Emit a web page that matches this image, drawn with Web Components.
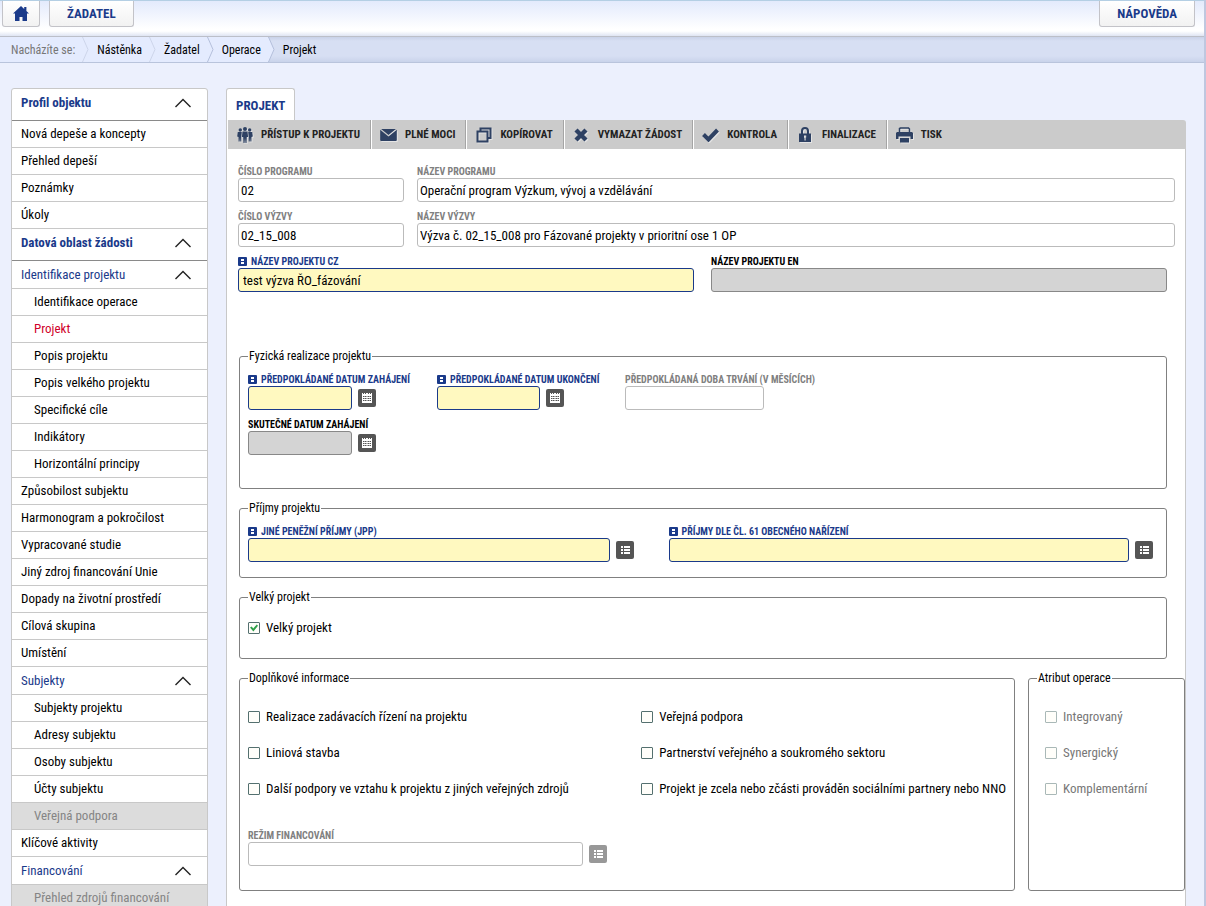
<!DOCTYPE html>
<html lang="cs">
<head>
<meta charset="utf-8">
<title>Projekt</title>
<style>
  html { background: #ecf0fd; scrollbar-width: none; }
  body {
    margin: 0;
    font: 13px/16px "Roboto Condensed", "Liberation Sans Narrow", Roboto, sans-serif;
    color: #000;
    --navy: #1a3a8a;
    --line: #c8c8c8;
  }
</style>
</head>
<body>
<portal-app></portal-app>

<script>
const icons = {
  home: '<svg width="16" height="15" viewBox="0 0 16 15"><path fill="#1a3a8a" d="M8 0 0 7.4h2V15h4.5v-4h3v4H14V7.4h2L13.400 5V1h-2.200v2z"/></svg>',
  people: '<svg width="16" height="16" viewBox="0 0 16 16"><g fill="#2e4163"><circle cx="8" cy="2" r="2"/><circle cx="3.300" cy="3" r="1.700"/><circle cx="12.700" cy="3" r="1.700"/><path d="M5.500 4.500h5l.6 5.500h-1.300L9.500 16h-1L8 11l-.5 5h-1L6.200 10H4.900zM.8 5h4L4.300 10v4.500h-1L3 10.500l-.4 4h-1L1.500 10 .2 9.500zM15.200 5h-4l.5 5v4.500h1l.3-4 .4 4h1l.1-4.500 1.300-.5z"/></g></svg>',
  mail: '<svg width="17" height="12" viewBox="0 0 18 13"><path fill="#2e4163" d="M1 0h16L9 6.500zM0 .8l9 7.400 9-7.400V12a1 1 0 0 1-1 1H1a1 1 0 0 1-1-1z"/></svg>',
  copy: '<svg width="16" height="16" viewBox="0 0 16 16"><path fill="none" stroke="#2e4163" stroke-width="2" d="M4.500 4V1.500h10v9.500h-3M1.500 4.500h10V14.500h-10z"/></svg>',
  cross: '<svg width="14" height="14" viewBox="0 0 14 14"><path stroke="#2e4163" stroke-width="4.400" d="m2 2 10 10M12 2 2 12"/></svg>',
  tick: '<svg width="17" height="14" viewBox="0 0 17 14"><path fill="none" stroke="#2e4163" stroke-width="4" d="m1.500 6.500 5 5L15.500 2"/></svg>',
  lock: '<svg width="12" height="15" viewBox="0 0 12 15"><path fill="none" stroke="#2e4163" stroke-width="2" d="M3 7V4a3 3 0 0 1 6 0v3"/><path fill="#2e4163" fill-rule="evenodd" d="M0 6.500h12V15H0zM5 8.500v2l.5.500v2.500h1.200V11l.5-.5v-2z"/></svg>',
  printer: '<svg width="17" height="16" viewBox="0 0 17 16"><path fill="none" stroke="#2e4163" stroke-width="1.500" d="M3.500 5V1.500L4.500 1h8l1 1v3"/><path fill="#2e4163" d="M0 6 1 5h15l1 1v6h-2.500V9.500h-12V12H0zM4 11h9v4.500H4z"/></svg>',
  up: '<svg width="18" height="10" viewBox="0 0 18 10"><path fill="none" stroke="#222" stroke-width="1.400" d="M1.500 9 9 1.500 16.500 9"/></svg>',
  calendar: '<svg width="18" height="18" viewBox="0 0 18 18"><rect width="18" height="18" rx="2" fill="#555"/><path fill="#fff" d="M4 4h1v1h1V4h1v1h1V4h2v1h1V4h1v1h1V4h1v10H4z"/><path fill="#555" d="M5 7h1.500v1H5zM7 7h1.500v1H7zM9.500 7H11v1H9.500zM11.500 7H13v1h-1.500zM5 9h1.500v1H5zM7 9h1.500v1H7zM9.500 9H11v1H9.500zM11.500 9H13v1h-1.500zM5 11h1.500v1H5zM7 11h1.500v1H7zM9.500 11H11v1H9.500zM11.500 11H13v1h-1.500z"/></svg>',
  list: '<svg width="18" height="18" viewBox="0 0 18 18"><rect width="18" height="18" rx="2" fill="#555"/><path fill="#fff" d="M5 5h2v2H5zM8 5h6v2H8zM5 8h2v2H5zM8 8h6v2H8zM5 11h2v2H5zM8 11h6v2H8z"/></svg>',
  info: '<svg width="9" height="9" viewBox="0 0 9 9"><rect width="9" height="9" rx="1" fill="#1a3a8a"/><path fill="#fff" d="M3 2h3v2H3zM3 5h3v2H3z"/></svg>'
};

class Part extends HTMLElement {
  connectedCallback() {
    if (this.shadowRoot) return;
    this.attachShadow({ mode: 'open' }).innerHTML =
      '<style>*{box-sizing:border-box}svg{display:block;flex:none}' + this.styles() + '</style>' + this.markup();
  }
  text(name) { return this.getAttribute(name) || ''; }
}

customElements.define('top-button', class extends Part {
  styles() { return `
    :host { display: block; }
    button { display: flex; align-items: center; justify-content: center; height: 26px; padding: 0 17px;
      border: 1px solid #c3c3c8; border-top: 0; border-radius: 0 0 3px 3px;
      background: linear-gradient(#fff, #f2f2f2); color: var(--navy); font-family: inherit; font-weight: bold; font-size: 13px; }
    :host([compact]) button { padding: 0 10px; }`; }
  markup() {
    const icon = this.text('icon');
    return `<button type="button"${icon ? ' aria-label="Domů"' : ''}>${icons[icon] || ''}<slot></slot></button>`;
  }
});

customElements.define('top-bar', class extends Part {
  styles() { return `
    :host { display: flex; gap: 9px; height: 37px; padding: 0 9px 0 2px; border-bottom: 1px solid #bcbfc8;
      border-top: 1px solid #b4cfe4; background: linear-gradient(#e3eafc, #fff 80%, #fff 86%, #dfe4f3); }
    top-button:last-child { margin-left: auto; }`; }
  markup() { return `<top-button icon="home" compact></top-button><top-button>ŽADATEL</top-button><top-button>NÁPOVĚDA</top-button>`; }
});

customElements.define('bread-crumbs', class extends Part {
  styles() { return `
    :host { display: block; }
    nav { display: flex; height: 26px; border-bottom: 1px solid #b9c4dc; font-size: 12px; line-height: 26px;
      background: linear-gradient(#c9d2e8, #d7dff3 4px, #d7dff3 19px, #c9d3ea); }
    span, a { padding: 0 7px 0 8px; background: #e4ebfe; color: #000; text-decoration: none; white-space: nowrap; }
    span { padding-left: 11px; color: #777; }
    a:last-child { background: none; }
    svg { background: #e4ebfe; }
    svg.last { background: none; }`; }
  markup() {
    const chevron = (stroke, cls) => `<svg class="${cls}" width="7" height="25" viewBox="0 0 7 25"><path fill="#e4ebfe" stroke="${stroke}" d="M-1 -1 .5 0 6 12.500 .5 25-1 26z"/></svg>`;
    return `<nav aria-label="Navigace"><span>Nacházíte se:</span>${chevron('#cdd5ea', '')}<a href="#">Nástěnka</a>${chevron('#cdd5ea', '')}<a href="#">Žadatel</a>${chevron('#b4bfdb', '')}<a href="#">Operace</a>${chevron('#b4bfdb', 'last')}<a href="#" aria-current="page">Projekt</a></nav>`;
  }
});

customElements.define('menu-row', class extends Part {
  styles() { return `
    :host { display: block; border-bottom: 1px solid var(--line); }
    a { display: flex; align-items: center; justify-content: space-between; height: 26px; padding: 0 15px 0 9px; color: #000; text-decoration: none; white-space: nowrap; }
    :host([kind=head]) { border-color: #8a8a8a; }
    :host([kind=head]) a { height: 31px; padding-bottom: 4px; color: var(--navy); font-weight: bold; }
    :host([kind=group]) a { height: 27px; color: var(--navy); }
    :host([kind=sub]) a, :host([kind=off]) a { padding-left: 22px; }
    :host([kind=off]) { background: #dcdcdc; }
    :host([kind=off]) a { color: #858585; }
    :host([current]) a { color: #d0002a; }`; }
  markup() {
    const folds = ['head', 'group'].includes(this.text('kind'));
    return `<a href="#"><slot></slot>${folds ? icons.up : ''}</a>`;
  }
});

customElements.define('side-menu', class extends Part {
  styles() { return `
    :host { display: block; border: 1px solid var(--line); border-radius: 3px 3px 0 0; background: #fff; }`; }
  markup() {
    const rows = [
      ['head', 'Profil objektu'], ['', 'Nová depeše a koncepty'], ['', 'Přehled depeší'], ['', 'Poznámky'], ['', 'Úkoly'],
      ['head', 'Datová oblast žádosti'], ['group', 'Identifikace projektu'], ['sub', 'Identifikace operace'],
      ['sub', 'Projekt', 'current'], ['sub', 'Popis projektu'], ['sub', 'Popis velkého projektu'], ['sub', 'Specifické cíle'],
      ['sub', 'Indikátory'], ['sub', 'Horizontální principy'], ['', 'Způsobilost subjektu'], ['', 'Harmonogram a pokročilost'],
      ['', 'Vypracované studie'], ['', 'Jiný zdroj financování Unie'], ['', 'Dopady na životní prostředí'], ['', 'Cílová skupina'],
      ['', 'Umístění'], ['group', 'Subjekty'], ['sub', 'Subjekty projektu'], ['sub', 'Adresy subjektu'], ['sub', 'Osoby subjektu'],
      ['sub', 'Účty subjektu'], ['off', 'Veřejná podpora'], ['', 'Klíčové aktivity'], ['group', 'Financování'],
      ['off', 'Přehled zdrojů financování']
    ];
    return '<nav aria-label="Menu">' + rows.map(([k, t, c]) => `<menu-row kind="${k}" ${c || ''}>${t}</menu-row>`).join('') + '</nav>';
  }
});

customElements.define('tool-button', class extends Part {
  styles() { return `
    :host { display: block; border-right: 1px solid #a5a5a5; border-left: 1px solid #fff; }
    :host(:last-child) { border-right: 0; }
    button { display: flex; align-items: center; gap: 8px; height: 29px; padding: 0 10px 0 8px; border: 0; background: none;
      color: #222; font-family: inherit; font-size: 11px; font-weight: bold; white-space: nowrap; }
    i { display: grid; place-items: center; width: 17px; }
    svg { filter: drop-shadow(1px 1px 0 #e4e4e4); }`; }
  markup() { return `<button type="button"><i>${icons[this.text('icon')]}</i><slot></slot></button>`; }
});

customElements.define('form-field', class extends Part {
  styles() { return `
    :host { display: block; min-width: 0; }
    label { display: flex; align-items: center; gap: 4px; height: 13px; color: #808080; font-size: 10px; line-height: 13px; font-weight: bold; white-space: nowrap; }
    div { display: flex; align-items: center; gap: 6px; }
    input { flex: 1; min-width: 0; width: 100%; height: 24px; padding: 0 2px; border: 1px solid #bbb; border-radius: 3px; background: #fff;
      color: #000; font-family: inherit; font-size: 13px; }
    button { padding: 0; border: 0; background: none; }
    button:disabled { opacity: .6; }
    :host([kind=required]) label { color: var(--navy); }
    :host([kind=required]) input { padding: 0 4px; border-color: var(--navy); background: #fff9c0; }
    :host([kind=optional]) label { color: #000; }
    :host([kind=optional]) input { border-color: #888; background: #d4d4d4; }`; }
  markup() {
    const kind = this.text('kind'), icon = this.text('icon');
    return `<label for="f">${kind === 'required' ? icons.info : ''}${this.text('label')}</label><div><input id="f" type="text" value="${this.text('value')}">${
      icon ? `<button type="button" aria-label="Vybrat"${this.hasAttribute('off') ? ' disabled' : ''}>${icons[icon]}</button>` : ''}</div>`;
  }
});

customElements.define('check-field', class extends Part {
  styles() { return `
    :host { display: block; }
    label { display: flex; align-items: center; gap: 6px; height: 16px; white-space: nowrap; }
    input { appearance: none; display: grid; place-items: center; flex: none; width: 12px; height: 12px; margin: 0; border: 1px solid #54706f; border-radius: 1px; background: #fffefa; }
    input:checked::before { content: ""; width: 8px; height: 8px; background: #2fa04a; clip-path: polygon(0 45%, 22% 30%, 40% 55%, 85% 5%, 100% 22%, 42% 95%); }
    input:disabled { border-color: #a9b8b7; }
    input:disabled + span { color: #777; }`; }
  markup() {
    const flags = ['checked', 'disabled'].filter(n => this.hasAttribute(n)).join(' ');
    return `<label><input type="checkbox" ${flags}><span><slot></slot></span></label>`;
  }
});

customElements.define('field-group', class extends Part {
  styles() { return `
    :host { display: block; min-width: 0; }
    fieldset { height: 100%; margin: 0; padding: 9px 8px 15px; min-width: 0; border: 1px solid #808080; border-radius: 3px; }
    legend { padding: 0 1px; font-size: 12px; line-height: 16px; }`; }
  markup() { return `<fieldset><legend>${this.text('label')}</legend><slot></slot></fieldset>`; }
});

customElements.define('project-form', class extends Part {
  styles() { return `
    :host { display: block; min-width: 0; }
    h1 { width: max-content; margin: 0; padding: 9px 9px 6px; border: 1px solid var(--line); border-bottom: 0; border-radius: 3px 3px 0 0;
      background: #fff; color: var(--navy); font-size: 13px; line-height: 16px; }
    .tools { display: flex; border-left: 1px solid var(--line); background: #cbcbcb; border-radius: 0 3px 0 0; }
    .sheet { border: 1px solid var(--line); border-top: 0; background: #fff; padding: 16px 0 40px 11px; }
    .pair { display: grid; grid-template-columns: 166px 1fr; gap: 8px 13px; margin-right: 10px; }
    .names { display: grid; grid-template-columns: 1fr 1fr; gap: 17px; margin: 8px 18px 56px 0; }
    .groups { display: flex; flex-direction: column; gap: 11px; margin-left: 1px; }
    .groups > field-group { margin-right: 18px; }
    .dates { display: grid; grid-template-columns: 128px 127px 139px; gap: 8px 61px; margin-bottom: 18px; }
    .incomes { display: grid; grid-template-columns: 386fr 485fr; gap: 35px; margin-right: 5px; }
    .big { padding: 6px 0 7px; }
    .last { display: grid; grid-template-columns: 1fr 157px; gap: 13px; }
    .checks { display: grid; grid-template-columns: 13fr 12fr; gap: 20px 0; padding: 14px 0 32px; }
    .column { display: grid; gap: 20px; padding: 14px 0 0 8px; }
    .mode { width: 359px; margin-bottom: 9px; }`; }
  markup() { return `
    <h1>PROJEKT</h1>
    <div class="tools">
      <tool-button icon="people">PŘÍSTUP K PROJEKTU</tool-button><tool-button icon="mail">PLNÉ MOCI</tool-button>
      <tool-button icon="copy">KOPÍROVAT</tool-button><tool-button icon="cross">VYMAZAT ŽÁDOST</tool-button>
      <tool-button icon="tick">KONTROLA</tool-button><tool-button icon="lock">FINALIZACE</tool-button><tool-button icon="printer">TISK</tool-button>
    </div>
    <div class="sheet">
      <div class="pair">
        <form-field label="ČÍSLO PROGRAMU" value="02"></form-field>
        <form-field label="NÁZEV PROGRAMU" value="Operační program Výzkum, vývoj a vzdělávání"></form-field>
        <form-field label="ČÍSLO VÝZVY" value="02_15_008"></form-field>
        <form-field label="NÁZEV VÝZVY" value="Výzva č. 02_15_008 pro Fázované projekty v prioritní ose 1 OP"></form-field>
      </div>
      <div class="names">
        <form-field kind="required" label="NÁZEV PROJEKTU CZ" value="test výzva ŘO_fázování"></form-field>
        <form-field kind="optional" label="NÁZEV PROJEKTU EN"></form-field>
      </div>
      <div class="groups">
        <field-group label="Fyzická realizace projektu">
          <div class="dates">
            <form-field kind="required" icon="calendar" label="PŘEDPOKLÁDANÉ DATUM ZAHÁJENÍ"></form-field>
            <form-field kind="required" icon="calendar" label="PŘEDPOKLÁDANÉ DATUM UKONČENÍ"></form-field>
            <form-field label="PŘEDPOKLÁDANÁ DOBA TRVÁNÍ (V MĚSÍCÍCH)"></form-field>
            <form-field kind="optional" icon="calendar" label="SKUTEČNÉ DATUM ZAHÁJENÍ"></form-field>
          </div>
        </field-group>
        <field-group label="Příjmy projektu">
          <div class="incomes">
            <form-field kind="required" icon="list" label="JINÉ PENĚŽNÍ PŘÍJMY (JPP)"></form-field>
            <form-field kind="required" icon="list" label="PŘÍJMY DLE ČL. 61 OBECNÉHO NAŘÍZENÍ"></form-field>
          </div>
        </field-group>
        <field-group label="Velký projekt">
          <div class="big"><check-field checked>Velký projekt</check-field></div>
        </field-group>
        <div class="last">
          <field-group label="Doplňkové informace">
            <div class="checks">
              <check-field>Realizace zadávacích řízení na projektu</check-field><check-field>Veřejná podpora</check-field>
              <check-field>Liniová stavba</check-field><check-field>Partnerství veřejného a soukromého sektoru</check-field>
              <check-field>Další podpory ve vztahu k projektu z jiných veřejných zdrojů</check-field>
              <check-field>Projekt je zcela nebo zčásti prováděn sociálními partnery nebo NNO</check-field>
            </div>
            <form-field class="mode" icon="list" off label="REŽIM FINANCOVÁNÍ"></form-field>
          </field-group>
          <field-group label="Atribut operace">
            <div class="column">
              <check-field disabled>Integrovaný</check-field><check-field disabled>Synergický</check-field><check-field disabled>Komplementární</check-field>
            </div>
          </field-group>
        </div>
      </div>
    </div>`; }
});

customElements.define('portal-app', class extends Part {
  styles() { return `
    :host { display: block; min-height: 100vh; border-right: 2px solid #bfc7df; background: #ecf0fd; }
    main { display: grid; grid-template-columns: 197px 1fr; align-items: start; gap: 18px; padding: 25px 18px 0 11px; }`; }
  markup() { return `<top-bar></top-bar><bread-crumbs></bread-crumbs><main><side-menu></side-menu><project-form></project-form></main>`; }
});
</script>
</body>
</html>
